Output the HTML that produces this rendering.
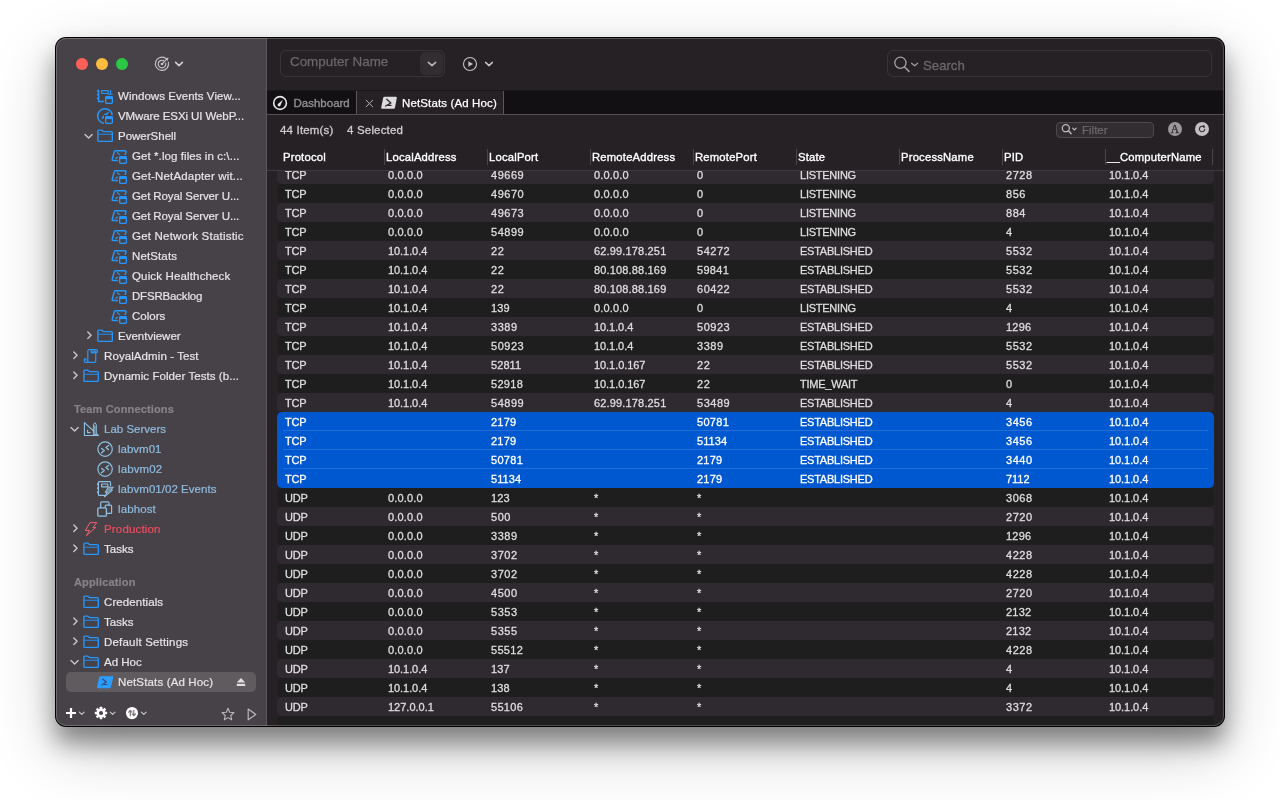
<!DOCTYPE html>
<html><head><meta charset="utf-8"><title>NetStats (Ad Hoc)</title>
<style>
*{box-sizing:border-box;margin:0;padding:0}
html,body{width:1280px;height:800px;overflow:hidden;background:#fff;font-family:"Liberation Sans",sans-serif;}
#win{position:absolute;left:55px;top:37px;width:1170px;height:690px;border-radius:11px;background:#000;
 box-shadow:0 22px 64px rgba(0,0,0,.22),0 16px 24px rgba(0,0,0,.4);}
#inner{position:absolute;left:1px;top:1px;right:1px;bottom:1px;border-radius:10px;overflow:hidden;background:#252125;}
#hl{position:absolute;left:1px;top:1px;right:1px;bottom:1px;border-radius:10px;border:1px solid rgba(255,255,255,.22);pointer-events:none;z-index:50}
/* coordinates inside #abs are page coordinates */
#abs{position:absolute;left:-56px;top:-38px;width:1280px;height:800px;will-change:transform}
#side{position:absolute;left:56px;top:38px;width:211px;height:688px;background:#474247;}
#sideline{position:absolute;left:266px;top:38px;width:1px;height:688px;background:#5a575a}
.t{position:absolute;white-space:nowrap;line-height:20px;height:20px;font-size:11.5px;color:#e6e4e6;-webkit-text-stroke:.2px}
.hd{color:#878387;font-weight:bold;font-size:11px;letter-spacing:.15px}
.lb{color:#8fbbe0}
.rd{color:#f04d5e}
#selrow{position:absolute;left:66px;top:672px;width:190px;height:20px;border-radius:5px;background:#605b5f}
svg{position:absolute;overflow:visible}
#tabbar{position:absolute;left:267px;top:91px;width:958px;height:23px;background:#121012}
#tabline{position:absolute;left:267px;top:114px;width:958px;height:1px;background:#524f52}
#tabact{position:absolute;left:356px;top:91px;width:148px;height:23px;background:#252125;border-left:1px solid #5a575a;border-right:1px solid #5a575a}
#tabtop{position:absolute;left:267px;top:90px;width:958px;height:1px;background:#1b181b}
.tab{position:absolute;white-space:nowrap;font-size:11.5px;line-height:23px;top:91.5px;-webkit-text-stroke:.25px}
.st{font-size:11.5px;color:#cfcdcf;letter-spacing:.18px;-webkit-text-stroke:.3px}
.box{position:absolute;border:1px solid rgba(255,255,255,.09);border-radius:6px}
.ph{position:absolute;white-space:nowrap;color:#6b676b}
.row{position:absolute;left:277px;width:937px;height:19px;border-radius:5px}
.r0{background:#2f2a2f}.r1{background:#1e1e1e}
.c{position:absolute;white-space:nowrap;font-size:11px;line-height:19px;color:#dfdddf;margin-top:1px;-webkit-text-stroke:.3px}
.sel .c{color:#fff}
.n{letter-spacing:.4px}.ip{letter-spacing:.16px}.u{letter-spacing:-.24px}
#selbg{position:absolute;left:277px;top:412px;width:937px;height:76px;border-radius:5px;background:#0058d0}
.sl{position:absolute;left:283px;width:925px;height:1px;background:rgba(255,255,255,.14)}
#thead{position:absolute;left:267px;top:146px;width:958px;height:24px;background:#252125}
#theadline{position:absolute;left:267px;top:170px;width:958px;height:1px;background:#3d393d}
.h{position:absolute;white-space:nowrap;font-size:11.25px;line-height:20px;top:147px;color:#fff;letter-spacing:.2px;-webkit-text-stroke:.35px #fff}
.vs{position:absolute;top:149px;width:1px;height:16px;background:#4a464a}
</style></head><body>
<div id="win"><div id="inner"><div id="abs">

<div id="side"></div><div id="sideline"></div>
<div id="selrow"></div>

<span class="t hd" style="left:74px;top:399px">Team Connections</span>
<span class="t hd" style="left:74px;top:572px">Application</span>
<span class="t " style="left:118px;top:86px;letter-spacing:0.045px">Windows Events View...</span>
<svg class="ic-evt" style="left:97px;top:88px" width="16" height="16" viewBox="0 0 16 16"><path d="M1.6 1.8 V13.5 H6.8" fill="none" stroke="#2697ff" stroke-width="1.4"/><rect x="0" y="2.2" width="1.6" height="1.7" fill="#2697ff"/><rect x="0" y="5.8" width="1.6" height="1.7" fill="#2697ff"/><rect x="0" y="9.6" width="1.6" height="1.7" fill="#2697ff"/><rect x="4.6" y="2.6" width="6.6" height="2.9" rx="0.7" fill="none" stroke="#2697ff" stroke-width="1.2"/><path d="M13.5 2 V6.2 M10.4 6.3 H15.6" fill="none" stroke="#2697ff" stroke-width="1.1"/><rect x="7" y="7" width="10" height="10" fill="#474247"/><rect x="8.65" y="8.65" width="6.7" height="6.7" rx="0.8" fill="none" stroke="#2697ff" stroke-width="1.3"/><rect x="8.6" y="8.6" width="6.8" height="2.5" fill="#2697ff"/></svg>
<span class="t " style="left:118px;top:106px;letter-spacing:-0.09px">VMware ESXi UI WebP...</span>
<svg class="ic-web" style="left:97px;top:108px" width="16" height="16" viewBox="0 0 16 16"><circle cx="8" cy="8" r="7.3" fill="none" stroke="#2697ff" stroke-width="1.5"/><path d="M12.4 3.6 L9 9 L4 11.6 L7.2 6.2 Z" fill="#2697ff"/><rect x="7" y="7" width="10" height="10" fill="#474247"/><rect x="8.65" y="8.65" width="6.7" height="6.7" rx="0.8" fill="none" stroke="#2697ff" stroke-width="1.3"/><rect x="8.6" y="8.6" width="6.8" height="2.5" fill="#2697ff"/></svg>
<span class="t " style="left:118px;top:126px">PowerShell</span>
<svg class="ic-fold" style="left:97px;top:128px" width="16" height="16" viewBox="0 0 16 16"><path d="M0.9 3.1 Q0.9 2.1 1.9 2.1 H4.6 Q5.2 2.1 5.6 2.6 L6.4 3.6 H14.3 Q15.3 3.6 15.3 4.6 V12.4 Q15.3 13.4 14.3 13.4 H1.9 Q0.9 13.4 0.9 12.4 Z" fill="none" stroke="#2697ff" stroke-width="1.35" stroke-linejoin="round"/><path d="M1 6.3 H15.2" stroke="#2a84dc" stroke-width="1.1" fill="none"/></svg>
<svg style="left:84px;top:131px" width="10" height="10" viewBox="0 0 10 10"><path d="M1 3.6 L4.6 6.9 L8.2 3.6" fill="none" stroke="#c9c6c9" stroke-width="1.4" stroke-linecap="round" stroke-linejoin="round"/></svg>
<span class="t " style="left:132px;top:146px;letter-spacing:0.08px">Get *.log files in c:\...</span>
<svg class="ic-ps" style="left:111px;top:148px" width="16" height="16" viewBox="0 0 16 16"><path d="M3.9 2.8 H14.2 Q15.3 2.8 15 3.9 L12.6 12.4 H1.9 Q0.8 12.4 1.2 11.3 L3.3 3.6 Q3.5 2.8 4.3 2.8" fill="none" stroke="#2697ff" stroke-width="1.45" stroke-linejoin="round"/><path d="M6.3 4.6 L8.7 6.8 M6.6 9 L4.8 10.3" fill="none" stroke="#2697ff" stroke-width="1.15" stroke-linecap="round"/><rect x="7" y="7" width="10" height="10" fill="#474247"/><rect x="8.65" y="8.65" width="6.7" height="6.7" rx="0.8" fill="none" stroke="#2697ff" stroke-width="1.3"/><rect x="8.6" y="8.6" width="6.8" height="2.5" fill="#2697ff"/></svg>
<span class="t " style="left:132px;top:166px;letter-spacing:0.17px">Get-NetAdapter wit...</span>
<svg class="ic-ps" style="left:111px;top:168px" width="16" height="16" viewBox="0 0 16 16"><path d="M3.9 2.8 H14.2 Q15.3 2.8 15 3.9 L12.6 12.4 H1.9 Q0.8 12.4 1.2 11.3 L3.3 3.6 Q3.5 2.8 4.3 2.8" fill="none" stroke="#2697ff" stroke-width="1.45" stroke-linejoin="round"/><path d="M6.3 4.6 L8.7 6.8 M6.6 9 L4.8 10.3" fill="none" stroke="#2697ff" stroke-width="1.15" stroke-linecap="round"/><rect x="7" y="7" width="10" height="10" fill="#474247"/><rect x="8.65" y="8.65" width="6.7" height="6.7" rx="0.8" fill="none" stroke="#2697ff" stroke-width="1.3"/><rect x="8.6" y="8.6" width="6.8" height="2.5" fill="#2697ff"/></svg>
<span class="t " style="left:132px;top:186px;letter-spacing:-0.1px">Get Royal Server U...</span>
<svg class="ic-ps" style="left:111px;top:188px" width="16" height="16" viewBox="0 0 16 16"><path d="M3.9 2.8 H14.2 Q15.3 2.8 15 3.9 L12.6 12.4 H1.9 Q0.8 12.4 1.2 11.3 L3.3 3.6 Q3.5 2.8 4.3 2.8" fill="none" stroke="#2697ff" stroke-width="1.45" stroke-linejoin="round"/><path d="M6.3 4.6 L8.7 6.8 M6.6 9 L4.8 10.3" fill="none" stroke="#2697ff" stroke-width="1.15" stroke-linecap="round"/><rect x="7" y="7" width="10" height="10" fill="#474247"/><rect x="8.65" y="8.65" width="6.7" height="6.7" rx="0.8" fill="none" stroke="#2697ff" stroke-width="1.3"/><rect x="8.6" y="8.6" width="6.8" height="2.5" fill="#2697ff"/></svg>
<span class="t " style="left:132px;top:206px;letter-spacing:-0.1px">Get Royal Server U...</span>
<svg class="ic-ps" style="left:111px;top:208px" width="16" height="16" viewBox="0 0 16 16"><path d="M3.9 2.8 H14.2 Q15.3 2.8 15 3.9 L12.6 12.4 H1.9 Q0.8 12.4 1.2 11.3 L3.3 3.6 Q3.5 2.8 4.3 2.8" fill="none" stroke="#2697ff" stroke-width="1.45" stroke-linejoin="round"/><path d="M6.3 4.6 L8.7 6.8 M6.6 9 L4.8 10.3" fill="none" stroke="#2697ff" stroke-width="1.15" stroke-linecap="round"/><rect x="7" y="7" width="10" height="10" fill="#474247"/><rect x="8.65" y="8.65" width="6.7" height="6.7" rx="0.8" fill="none" stroke="#2697ff" stroke-width="1.3"/><rect x="8.6" y="8.6" width="6.8" height="2.5" fill="#2697ff"/></svg>
<span class="t " style="left:132px;top:226px;letter-spacing:0.21px">Get Network Statistic</span>
<svg class="ic-ps" style="left:111px;top:228px" width="16" height="16" viewBox="0 0 16 16"><path d="M3.9 2.8 H14.2 Q15.3 2.8 15 3.9 L12.6 12.4 H1.9 Q0.8 12.4 1.2 11.3 L3.3 3.6 Q3.5 2.8 4.3 2.8" fill="none" stroke="#2697ff" stroke-width="1.45" stroke-linejoin="round"/><path d="M6.3 4.6 L8.7 6.8 M6.6 9 L4.8 10.3" fill="none" stroke="#2697ff" stroke-width="1.15" stroke-linecap="round"/><rect x="7" y="7" width="10" height="10" fill="#474247"/><rect x="8.65" y="8.65" width="6.7" height="6.7" rx="0.8" fill="none" stroke="#2697ff" stroke-width="1.3"/><rect x="8.6" y="8.6" width="6.8" height="2.5" fill="#2697ff"/></svg>
<span class="t " style="left:132px;top:246px;letter-spacing:0.12px">NetStats</span>
<svg class="ic-ps" style="left:111px;top:248px" width="16" height="16" viewBox="0 0 16 16"><path d="M3.9 2.8 H14.2 Q15.3 2.8 15 3.9 L12.6 12.4 H1.9 Q0.8 12.4 1.2 11.3 L3.3 3.6 Q3.5 2.8 4.3 2.8" fill="none" stroke="#2697ff" stroke-width="1.45" stroke-linejoin="round"/><path d="M6.3 4.6 L8.7 6.8 M6.6 9 L4.8 10.3" fill="none" stroke="#2697ff" stroke-width="1.15" stroke-linecap="round"/><rect x="7" y="7" width="10" height="10" fill="#474247"/><rect x="8.65" y="8.65" width="6.7" height="6.7" rx="0.8" fill="none" stroke="#2697ff" stroke-width="1.3"/><rect x="8.6" y="8.6" width="6.8" height="2.5" fill="#2697ff"/></svg>
<span class="t " style="left:132px;top:266px;letter-spacing:0.15px">Quick Healthcheck</span>
<svg class="ic-ps" style="left:111px;top:268px" width="16" height="16" viewBox="0 0 16 16"><path d="M3.9 2.8 H14.2 Q15.3 2.8 15 3.9 L12.6 12.4 H1.9 Q0.8 12.4 1.2 11.3 L3.3 3.6 Q3.5 2.8 4.3 2.8" fill="none" stroke="#2697ff" stroke-width="1.45" stroke-linejoin="round"/><path d="M6.3 4.6 L8.7 6.8 M6.6 9 L4.8 10.3" fill="none" stroke="#2697ff" stroke-width="1.15" stroke-linecap="round"/><rect x="7" y="7" width="10" height="10" fill="#474247"/><rect x="8.65" y="8.65" width="6.7" height="6.7" rx="0.8" fill="none" stroke="#2697ff" stroke-width="1.3"/><rect x="8.6" y="8.6" width="6.8" height="2.5" fill="#2697ff"/></svg>
<span class="t " style="left:132px;top:286px;letter-spacing:-0.18px">DFSRBacklog</span>
<svg class="ic-ps" style="left:111px;top:288px" width="16" height="16" viewBox="0 0 16 16"><path d="M3.9 2.8 H14.2 Q15.3 2.8 15 3.9 L12.6 12.4 H1.9 Q0.8 12.4 1.2 11.3 L3.3 3.6 Q3.5 2.8 4.3 2.8" fill="none" stroke="#2697ff" stroke-width="1.45" stroke-linejoin="round"/><path d="M6.3 4.6 L8.7 6.8 M6.6 9 L4.8 10.3" fill="none" stroke="#2697ff" stroke-width="1.15" stroke-linecap="round"/><rect x="7" y="7" width="10" height="10" fill="#474247"/><rect x="8.65" y="8.65" width="6.7" height="6.7" rx="0.8" fill="none" stroke="#2697ff" stroke-width="1.3"/><rect x="8.6" y="8.6" width="6.8" height="2.5" fill="#2697ff"/></svg>
<span class="t " style="left:132px;top:306px">Colors</span>
<svg class="ic-ps" style="left:111px;top:308px" width="16" height="16" viewBox="0 0 16 16"><path d="M3.9 2.8 H14.2 Q15.3 2.8 15 3.9 L12.6 12.4 H1.9 Q0.8 12.4 1.2 11.3 L3.3 3.6 Q3.5 2.8 4.3 2.8" fill="none" stroke="#2697ff" stroke-width="1.45" stroke-linejoin="round"/><path d="M6.3 4.6 L8.7 6.8 M6.6 9 L4.8 10.3" fill="none" stroke="#2697ff" stroke-width="1.15" stroke-linecap="round"/><rect x="7" y="7" width="10" height="10" fill="#474247"/><rect x="8.65" y="8.65" width="6.7" height="6.7" rx="0.8" fill="none" stroke="#2697ff" stroke-width="1.3"/><rect x="8.6" y="8.6" width="6.8" height="2.5" fill="#2697ff"/></svg>
<span class="t " style="left:118px;top:326px">Eventviewer</span>
<svg class="ic-fold" style="left:97px;top:328px" width="16" height="16" viewBox="0 0 16 16"><path d="M0.9 3.1 Q0.9 2.1 1.9 2.1 H4.6 Q5.2 2.1 5.6 2.6 L6.4 3.6 H14.3 Q15.3 3.6 15.3 4.6 V12.4 Q15.3 13.4 14.3 13.4 H1.9 Q0.9 13.4 0.9 12.4 Z" fill="none" stroke="#2697ff" stroke-width="1.35" stroke-linejoin="round"/><path d="M1 6.3 H15.2" stroke="#2a84dc" stroke-width="1.1" fill="none"/></svg>
<svg style="left:84px;top:331px" width="10" height="10" viewBox="0 0 10 10"><path d="M3.8 0.9 L7.1 4.3 L3.8 7.6" fill="none" stroke="#c9c6c9" stroke-width="1.4" stroke-linecap="round" stroke-linejoin="round"/></svg>
<span class="t " style="left:104px;top:346px;letter-spacing:0.09px">RoyalAdmin - Test</span>
<svg class="ic-doc" style="left:83px;top:348px" width="16" height="16" viewBox="0 0 16 16"><path d="M4.8 14.2 V3.2 Q4.8 1.7 6.3 1.7 H13.2 Q14.4 1.7 14.4 2.9 V3.6 Q14.4 4.7 13.3 4.7 H8.4 V3.2 Q8.4 1.7 6.9 1.7 M12.7 4.8 V12.9 Q12.7 14.3 11.3 14.3 H2.8 Q1.4 14.3 1.4 12.9 V11.4 Q1.4 10.5 2.2 10.5 Q3 10.5 3 11.4 V12" fill="none" stroke="#2697ff" stroke-width="1.2" stroke-linejoin="round" stroke-linecap="round"/><path d="M9.4 3.2 H13.4" stroke="#2697ff" stroke-width="1.3"/></svg>
<svg style="left:70px;top:351px" width="10" height="10" viewBox="0 0 10 10"><path d="M3.8 0.9 L7.1 4.3 L3.8 7.6" fill="none" stroke="#c9c6c9" stroke-width="1.4" stroke-linecap="round" stroke-linejoin="round"/></svg>
<span class="t " style="left:104px;top:366px;letter-spacing:0.06px">Dynamic Folder Tests (b...</span>
<svg class="ic-fold" style="left:83px;top:368px" width="16" height="16" viewBox="0 0 16 16"><path d="M0.9 3.1 Q0.9 2.1 1.9 2.1 H4.6 Q5.2 2.1 5.6 2.6 L6.4 3.6 H14.3 Q15.3 3.6 15.3 4.6 V12.4 Q15.3 13.4 14.3 13.4 H1.9 Q0.9 13.4 0.9 12.4 Z" fill="none" stroke="#2697ff" stroke-width="1.35" stroke-linejoin="round"/><path d="M1 6.3 H15.2" stroke="#2a84dc" stroke-width="1.1" fill="none"/></svg>
<svg style="left:70px;top:371px" width="10" height="10" viewBox="0 0 10 10"><path d="M3.8 0.9 L7.1 4.3 L3.8 7.6" fill="none" stroke="#c9c6c9" stroke-width="1.4" stroke-linecap="round" stroke-linejoin="round"/></svg>
<span class="t lb" style="left:104px;top:419px">Lab Servers</span>
<svg class="ic-lab" style="left:83px;top:421px" width="16" height="16" viewBox="0 0 16 16"><path d="M1.4 1.6 V14.5 H15.4 Z" fill="none" stroke="#8fc1e3" stroke-width="1.1" stroke-linejoin="round"/><path d="M4.6 8.8 V11.6 H7.6" fill="none" stroke="#8fc1e3" stroke-width="1.1"/><path d="M10.4 13.6 V3.8 L11.85 1.7 L13.3 3.8 V13.6 Z M11.85 4.5 V13.4" fill="#474247" stroke="#8fc1e3" stroke-width="1" stroke-linejoin="round"/></svg>
<svg style="left:70px;top:424px" width="10" height="10" viewBox="0 0 10 10"><path d="M1 3.6 L4.6 6.9 L8.2 3.6" fill="none" stroke="#c9c6c9" stroke-width="1.4" stroke-linecap="round" stroke-linejoin="round"/></svg>
<span class="t lb" style="left:118px;top:439px">labvm01</span>
<svg class="ic-rdp" style="left:97px;top:441px" width="16" height="16" viewBox="0 0 16 16"><circle cx="8.1" cy="8.1" r="7.2" fill="none" stroke="#8fc1e3" stroke-width="1.2"/><path d="M4.6 7.4 L7.3 9.5 L4.6 11.8 M11.6 4.4 L8.9 6.4 L11.4 8.6" fill="none" stroke="#8fc1e3" stroke-width="1.3" stroke-linecap="round" stroke-linejoin="round"/></svg>
<span class="t lb" style="left:118px;top:459px;letter-spacing:0.1px">labvm02</span>
<svg class="ic-rdp" style="left:97px;top:461px" width="16" height="16" viewBox="0 0 16 16"><circle cx="8.1" cy="8.1" r="7.2" fill="none" stroke="#8fc1e3" stroke-width="1.2"/><path d="M4.6 7.4 L7.3 9.5 L4.6 11.8 M11.6 4.4 L8.9 6.4 L11.4 8.6" fill="none" stroke="#8fc1e3" stroke-width="1.3" stroke-linecap="round" stroke-linejoin="round"/></svg>
<span class="t lb" style="left:118px;top:479px;letter-spacing:0.04px">labvm01/02 Events</span>
<svg class="ic-evt2" style="left:97px;top:481px" width="16" height="16" viewBox="0 0 16 16"><path d="M8 14.4 H2.3 Q1.4 14.4 1.4 13.5 V1.5 Q1.4 0.6 2.3 0.6 H12.6 Q13.5 0.6 13.5 1.5 V5" fill="none" stroke="#8fc1e3" stroke-width="1.2"/><rect x="0" y="2.4" width="1.5" height="1.7" fill="#8fc1e3"/><rect x="0" y="6.4" width="1.5" height="1.7" fill="#8fc1e3"/><rect x="0" y="10.4" width="1.5" height="1.7" fill="#8fc1e3"/><rect x="4.6" y="3" width="6.2" height="2.8" rx="0.4" fill="none" stroke="#8fc1e3" stroke-width="1.2"/><path d="M11.2 6.2 H16.4 L13.8 9.2 H15.6 L7.4 16 L10.2 11.4 H8.2 Z" fill="#6f8fa8" stroke="#9fcbe8" stroke-width="0.9" stroke-linejoin="round"/></svg>
<span class="t lb" style="left:118px;top:499px;letter-spacing:0.1px">labhost</span>
<svg class="ic-vm" style="left:97px;top:501px" width="16" height="16" viewBox="0 0 16 16"><rect x="3.7" y="0.8" width="8.3" height="8.3" rx="1" fill="#474247" stroke="#8fc1e3" stroke-width="1.2"/><rect x="8.2" y="4.2" width="6.4" height="8.2" rx="1" fill="#474247" stroke="#8fc1e3" stroke-width="1.2"/><rect x="0.8" y="6.8" width="8.6" height="8.4" rx="1.2" fill="#474247" stroke="#8fc1e3" stroke-width="1.3"/></svg>
<span class="t rd" style="left:104px;top:519px;letter-spacing:0.16px">Production</span>
<svg class="ic-bolt" style="left:83px;top:521px" width="16" height="16" viewBox="0 0 16 16"><path d="M7 1.6 H13.8 L9.9 6.4 H12.8 L3.3 14.7 L6.5 9.5 H2.4 Z" fill="none" stroke="#f0636f" stroke-width="1" stroke-linejoin="round"/></svg>
<svg style="left:70px;top:524px" width="10" height="10" viewBox="0 0 10 10"><path d="M3.8 0.9 L7.1 4.3 L3.8 7.6" fill="none" stroke="#c9c6c9" stroke-width="1.4" stroke-linecap="round" stroke-linejoin="round"/></svg>
<span class="t " style="left:104px;top:539px">Tasks</span>
<svg class="ic-fold" style="left:83px;top:541px" width="16" height="16" viewBox="0 0 16 16"><path d="M0.9 3.1 Q0.9 2.1 1.9 2.1 H4.6 Q5.2 2.1 5.6 2.6 L6.4 3.6 H14.3 Q15.3 3.6 15.3 4.6 V12.4 Q15.3 13.4 14.3 13.4 H1.9 Q0.9 13.4 0.9 12.4 Z" fill="none" stroke="#2697ff" stroke-width="1.35" stroke-linejoin="round"/><path d="M1 6.3 H15.2" stroke="#2a84dc" stroke-width="1.1" fill="none"/></svg>
<svg style="left:70px;top:544px" width="10" height="10" viewBox="0 0 10 10"><path d="M3.8 0.9 L7.1 4.3 L3.8 7.6" fill="none" stroke="#c9c6c9" stroke-width="1.4" stroke-linecap="round" stroke-linejoin="round"/></svg>
<span class="t " style="left:104px;top:592px;letter-spacing:0.09px">Credentials</span>
<svg class="ic-fold" style="left:83px;top:594px" width="16" height="16" viewBox="0 0 16 16"><path d="M0.9 3.1 Q0.9 2.1 1.9 2.1 H4.6 Q5.2 2.1 5.6 2.6 L6.4 3.6 H14.3 Q15.3 3.6 15.3 4.6 V12.4 Q15.3 13.4 14.3 13.4 H1.9 Q0.9 13.4 0.9 12.4 Z" fill="none" stroke="#2697ff" stroke-width="1.35" stroke-linejoin="round"/><path d="M1 6.3 H15.2" stroke="#2a84dc" stroke-width="1.1" fill="none"/></svg>
<span class="t " style="left:104px;top:612px">Tasks</span>
<svg class="ic-fold" style="left:83px;top:614px" width="16" height="16" viewBox="0 0 16 16"><path d="M0.9 3.1 Q0.9 2.1 1.9 2.1 H4.6 Q5.2 2.1 5.6 2.6 L6.4 3.6 H14.3 Q15.3 3.6 15.3 4.6 V12.4 Q15.3 13.4 14.3 13.4 H1.9 Q0.9 13.4 0.9 12.4 Z" fill="none" stroke="#2697ff" stroke-width="1.35" stroke-linejoin="round"/><path d="M1 6.3 H15.2" stroke="#2a84dc" stroke-width="1.1" fill="none"/></svg>
<svg style="left:70px;top:617px" width="10" height="10" viewBox="0 0 10 10"><path d="M3.8 0.9 L7.1 4.3 L3.8 7.6" fill="none" stroke="#c9c6c9" stroke-width="1.4" stroke-linecap="round" stroke-linejoin="round"/></svg>
<span class="t " style="left:104px;top:632px;letter-spacing:0.19px">Default Settings</span>
<svg class="ic-fold" style="left:83px;top:634px" width="16" height="16" viewBox="0 0 16 16"><path d="M0.9 3.1 Q0.9 2.1 1.9 2.1 H4.6 Q5.2 2.1 5.6 2.6 L6.4 3.6 H14.3 Q15.3 3.6 15.3 4.6 V12.4 Q15.3 13.4 14.3 13.4 H1.9 Q0.9 13.4 0.9 12.4 Z" fill="none" stroke="#2697ff" stroke-width="1.35" stroke-linejoin="round"/><path d="M1 6.3 H15.2" stroke="#2a84dc" stroke-width="1.1" fill="none"/></svg>
<svg style="left:70px;top:637px" width="10" height="10" viewBox="0 0 10 10"><path d="M3.8 0.9 L7.1 4.3 L3.8 7.6" fill="none" stroke="#c9c6c9" stroke-width="1.4" stroke-linecap="round" stroke-linejoin="round"/></svg>
<span class="t " style="left:104px;top:652px">Ad Hoc</span>
<svg class="ic-fold" style="left:83px;top:654px" width="16" height="16" viewBox="0 0 16 16"><path d="M0.9 3.1 Q0.9 2.1 1.9 2.1 H4.6 Q5.2 2.1 5.6 2.6 L6.4 3.6 H14.3 Q15.3 3.6 15.3 4.6 V12.4 Q15.3 13.4 14.3 13.4 H1.9 Q0.9 13.4 0.9 12.4 Z" fill="none" stroke="#2697ff" stroke-width="1.35" stroke-linejoin="round"/><path d="M1 6.3 H15.2" stroke="#2a84dc" stroke-width="1.1" fill="none"/></svg>
<svg style="left:70px;top:657px" width="10" height="10" viewBox="0 0 10 10"><path d="M1 3.6 L4.6 6.9 L8.2 3.6" fill="none" stroke="#c9c6c9" stroke-width="1.4" stroke-linecap="round" stroke-linejoin="round"/></svg>
<span class="t " style="left:118px;top:672px;letter-spacing:0.15px">NetStats (Ad Hoc)</span>
<svg class="ic-psf" style="left:97px;top:674px" width="16" height="16" viewBox="0 0 16 16"><path d="M3.3 3.2 H15.2 Q16.5 3.2 16.2 4.5 L14 15 Q13.8 16.2 12.6 16.2 H0.9 Q-0.3 16.2 0 15 L2.2 4.2 Q2.4 3.2 3.3 3.2 Z" transform="translate(0,-0.7) scale(1,0.92)" fill="#2a9dff"/><path d="M5.6 5 L9.3 8 L4.8 10.9 M7.2 10.5 H9.8" fill="none" stroke="#34466e" stroke-width="1.05" stroke-linecap="round" stroke-linejoin="round"/></svg>
<div id="topbar">
<div class="box" style="left:280px;top:50px;width:165px;height:27px"></div>
<div style="position:absolute;left:420px;top:52px;width:23px;height:23px;border-radius:5px;background:#322d31"></div>
<span class="ph" style="left:290px;top:52px;font-size:13.4px;line-height:20px;-webkit-text-stroke:.25px">Computer Name</span>
<div class="box" style="left:887px;top:50px;width:325px;height:27px"></div>
<span class="ph" style="left:923px;top:55.5px;font-size:13.2px;line-height:20px;-webkit-text-stroke:.3px">Search</span>
</div>
<div id="tabbar"></div><div id="tabact"></div><div id="tabline"></div><div id="tabtop"></div>
<span class="tab" style="left:293.5px;color:#928e92;-webkit-text-stroke:.35px">Dashboard</span>
<span class="tab" style="left:402px;color:#fff;letter-spacing:.13px">NetStats (Ad Hoc)</span>
<span class="t st" style="left:280px;top:120px">44 Item(s)</span>
<span class="t st" style="left:347px;top:120px">4 Selected</span>
<div style="position:absolute;left:1056px;top:122px;width:98px;height:16px;border-radius:4px;background:#322d31;border:1px solid #4d494d"></div>
<span class="ph" style="left:1082px;top:120px;font-size:11.5px;line-height:20px;-webkit-text-stroke:.25px">Filter</span>

<div id="table">
<div id="selbg"></div>
<div class="row r0" style="top:165px"></div>
<div class="row r1" style="top:184px"></div>
<div class="row r0" style="top:203px"></div>
<div class="row r1" style="top:222px"></div>
<div class="row r0" style="top:241px"></div>
<div class="row r1" style="top:260px"></div>
<div class="row r0" style="top:279px"></div>
<div class="row r1" style="top:298px"></div>
<div class="row r0" style="top:317px"></div>
<div class="row r1" style="top:336px"></div>
<div class="row r0" style="top:355px"></div>
<div class="row r1" style="top:374px"></div>
<div class="row r0" style="top:393px"></div>
<div class="row r1" style="top:488px"></div>
<div class="row r0" style="top:507px"></div>
<div class="row r1" style="top:526px"></div>
<div class="row r0" style="top:545px"></div>
<div class="row r1" style="top:564px"></div>
<div class="row r0" style="top:583px"></div>
<div class="row r1" style="top:602px"></div>
<div class="row r0" style="top:621px"></div>
<div class="row r1" style="top:640px"></div>
<div class="row r0" style="top:659px"></div>
<div class="row r1" style="top:678px"></div>
<div class="row r0" style="top:697px"></div>
<div class="row r1" style="top:716px"></div>
<div class="sl" style="top:430px"></div>
<div class="sl" style="top:449px"></div>
<div class="sl" style="top:468px"></div>
<div class="nrm"><span class="c" style="left:285px;top:165px;letter-spacing:-0.24px">TCP</span><span class="c" style="left:388px;top:165px;letter-spacing:0.17px">0.0.0.0</span><span class="c" style="left:491px;top:165px;letter-spacing:0.53px">49669</span><span class="c" style="left:594px;top:165px;letter-spacing:0.17px">0.0.0.0</span><span class="c" style="left:697px;top:165px;letter-spacing:0.53px">0</span><span class="c" style="left:800px;top:165px;letter-spacing:-0.24px">LISTENING</span><span class="c" style="left:1006px;top:165px;letter-spacing:0.53px">2728</span><span class="c" style="left:1109px;top:165px;letter-spacing:-0.07px">10.1.0.4</span></div>
<div class="nrm"><span class="c" style="left:285px;top:184px;letter-spacing:-0.24px">TCP</span><span class="c" style="left:388px;top:184px;letter-spacing:0.17px">0.0.0.0</span><span class="c" style="left:491px;top:184px;letter-spacing:0.53px">49670</span><span class="c" style="left:594px;top:184px;letter-spacing:0.17px">0.0.0.0</span><span class="c" style="left:697px;top:184px;letter-spacing:0.53px">0</span><span class="c" style="left:800px;top:184px;letter-spacing:-0.24px">LISTENING</span><span class="c" style="left:1006px;top:184px;letter-spacing:0.53px">856</span><span class="c" style="left:1109px;top:184px;letter-spacing:-0.07px">10.1.0.4</span></div>
<div class="nrm"><span class="c" style="left:285px;top:203px;letter-spacing:-0.24px">TCP</span><span class="c" style="left:388px;top:203px;letter-spacing:0.17px">0.0.0.0</span><span class="c" style="left:491px;top:203px;letter-spacing:0.53px">49673</span><span class="c" style="left:594px;top:203px;letter-spacing:0.17px">0.0.0.0</span><span class="c" style="left:697px;top:203px;letter-spacing:0.53px">0</span><span class="c" style="left:800px;top:203px;letter-spacing:-0.24px">LISTENING</span><span class="c" style="left:1006px;top:203px;letter-spacing:0.53px">884</span><span class="c" style="left:1109px;top:203px;letter-spacing:-0.07px">10.1.0.4</span></div>
<div class="nrm"><span class="c" style="left:285px;top:222px;letter-spacing:-0.24px">TCP</span><span class="c" style="left:388px;top:222px;letter-spacing:0.17px">0.0.0.0</span><span class="c" style="left:491px;top:222px;letter-spacing:0.53px">54899</span><span class="c" style="left:594px;top:222px;letter-spacing:0.17px">0.0.0.0</span><span class="c" style="left:697px;top:222px;letter-spacing:0.53px">0</span><span class="c" style="left:800px;top:222px;letter-spacing:-0.24px">LISTENING</span><span class="c" style="left:1006px;top:222px;letter-spacing:0.53px">4</span><span class="c" style="left:1109px;top:222px;letter-spacing:-0.07px">10.1.0.4</span></div>
<div class="nrm"><span class="c" style="left:285px;top:241px;letter-spacing:-0.24px">TCP</span><span class="c" style="left:388px;top:241px;letter-spacing:-0.07px">10.1.0.4</span><span class="c" style="left:491px;top:241px;letter-spacing:0.53px">22</span><span class="c" style="left:594px;top:241px;letter-spacing:0.16px">62.99.178.251</span><span class="c" style="left:697px;top:241px;letter-spacing:0.53px">54272</span><span class="c" style="left:800px;top:241px;letter-spacing:-0.24px">ESTABLISHED</span><span class="c" style="left:1006px;top:241px;letter-spacing:0.53px">5532</span><span class="c" style="left:1109px;top:241px;letter-spacing:-0.07px">10.1.0.4</span></div>
<div class="nrm"><span class="c" style="left:285px;top:260px;letter-spacing:-0.24px">TCP</span><span class="c" style="left:388px;top:260px;letter-spacing:-0.07px">10.1.0.4</span><span class="c" style="left:491px;top:260px;letter-spacing:0.53px">22</span><span class="c" style="left:594px;top:260px;letter-spacing:0.16px">80.108.88.169</span><span class="c" style="left:697px;top:260px;letter-spacing:0.30px">59841</span><span class="c" style="left:800px;top:260px;letter-spacing:-0.24px">ESTABLISHED</span><span class="c" style="left:1006px;top:260px;letter-spacing:0.53px">5532</span><span class="c" style="left:1109px;top:260px;letter-spacing:-0.07px">10.1.0.4</span></div>
<div class="nrm"><span class="c" style="left:285px;top:279px;letter-spacing:-0.24px">TCP</span><span class="c" style="left:388px;top:279px;letter-spacing:-0.07px">10.1.0.4</span><span class="c" style="left:491px;top:279px;letter-spacing:0.53px">22</span><span class="c" style="left:594px;top:279px;letter-spacing:0.16px">80.108.88.169</span><span class="c" style="left:697px;top:279px;letter-spacing:0.53px">60422</span><span class="c" style="left:800px;top:279px;letter-spacing:-0.24px">ESTABLISHED</span><span class="c" style="left:1006px;top:279px;letter-spacing:0.53px">5532</span><span class="c" style="left:1109px;top:279px;letter-spacing:-0.07px">10.1.0.4</span></div>
<div class="nrm"><span class="c" style="left:285px;top:298px;letter-spacing:-0.24px">TCP</span><span class="c" style="left:388px;top:298px;letter-spacing:-0.07px">10.1.0.4</span><span class="c" style="left:491px;top:298px;letter-spacing:0.15px">139</span><span class="c" style="left:594px;top:298px;letter-spacing:0.17px">0.0.0.0</span><span class="c" style="left:697px;top:298px;letter-spacing:0.53px">0</span><span class="c" style="left:800px;top:298px;letter-spacing:-0.24px">LISTENING</span><span class="c" style="left:1006px;top:298px;letter-spacing:0.53px">4</span><span class="c" style="left:1109px;top:298px;letter-spacing:-0.07px">10.1.0.4</span></div>
<div class="nrm"><span class="c" style="left:285px;top:317px;letter-spacing:-0.24px">TCP</span><span class="c" style="left:388px;top:317px;letter-spacing:-0.07px">10.1.0.4</span><span class="c" style="left:491px;top:317px;letter-spacing:0.53px">3389</span><span class="c" style="left:594px;top:317px;letter-spacing:-0.07px">10.1.0.4</span><span class="c" style="left:697px;top:317px;letter-spacing:0.53px">50923</span><span class="c" style="left:800px;top:317px;letter-spacing:-0.24px">ESTABLISHED</span><span class="c" style="left:1006px;top:317px;letter-spacing:0.25px">1296</span><span class="c" style="left:1109px;top:317px;letter-spacing:-0.07px">10.1.0.4</span></div>
<div class="nrm"><span class="c" style="left:285px;top:336px;letter-spacing:-0.24px">TCP</span><span class="c" style="left:388px;top:336px;letter-spacing:-0.07px">10.1.0.4</span><span class="c" style="left:491px;top:336px;letter-spacing:0.53px">50923</span><span class="c" style="left:594px;top:336px;letter-spacing:-0.07px">10.1.0.4</span><span class="c" style="left:697px;top:336px;letter-spacing:0.53px">3389</span><span class="c" style="left:800px;top:336px;letter-spacing:-0.24px">ESTABLISHED</span><span class="c" style="left:1006px;top:336px;letter-spacing:0.53px">5532</span><span class="c" style="left:1109px;top:336px;letter-spacing:-0.07px">10.1.0.4</span></div>
<div class="nrm"><span class="c" style="left:285px;top:355px;letter-spacing:-0.24px">TCP</span><span class="c" style="left:388px;top:355px;letter-spacing:-0.07px">10.1.0.4</span><span class="c" style="left:491px;top:355px;letter-spacing:0.07px">52811</span><span class="c" style="left:594px;top:355px;letter-spacing:-0.06px">10.1.0.167</span><span class="c" style="left:697px;top:355px;letter-spacing:0.53px">22</span><span class="c" style="left:800px;top:355px;letter-spacing:-0.24px">ESTABLISHED</span><span class="c" style="left:1006px;top:355px;letter-spacing:0.53px">5532</span><span class="c" style="left:1109px;top:355px;letter-spacing:-0.07px">10.1.0.4</span></div>
<div class="nrm"><span class="c" style="left:285px;top:374px;letter-spacing:-0.24px">TCP</span><span class="c" style="left:388px;top:374px;letter-spacing:-0.07px">10.1.0.4</span><span class="c" style="left:491px;top:374px;letter-spacing:0.30px">52918</span><span class="c" style="left:594px;top:374px;letter-spacing:-0.06px">10.1.0.167</span><span class="c" style="left:697px;top:374px;letter-spacing:0.53px">22</span><span class="c" style="left:800px;top:374px;letter-spacing:-0.24px">TIME_WAIT</span><span class="c" style="left:1006px;top:374px;letter-spacing:0.53px">0</span><span class="c" style="left:1109px;top:374px;letter-spacing:-0.07px">10.1.0.4</span></div>
<div class="nrm"><span class="c" style="left:285px;top:393px;letter-spacing:-0.24px">TCP</span><span class="c" style="left:388px;top:393px;letter-spacing:-0.07px">10.1.0.4</span><span class="c" style="left:491px;top:393px;letter-spacing:0.53px">54899</span><span class="c" style="left:594px;top:393px;letter-spacing:0.16px">62.99.178.251</span><span class="c" style="left:697px;top:393px;letter-spacing:0.53px">53489</span><span class="c" style="left:800px;top:393px;letter-spacing:-0.24px">ESTABLISHED</span><span class="c" style="left:1006px;top:393px;letter-spacing:0.53px">4</span><span class="c" style="left:1109px;top:393px;letter-spacing:-0.07px">10.1.0.4</span></div>
<div class="sel"><span class="c" style="left:285px;top:412px;letter-spacing:-0.24px">TCP</span><span class="c" style="left:491px;top:412px;letter-spacing:0.25px">2179</span><span class="c" style="left:697px;top:412px;letter-spacing:0.30px">50781</span><span class="c" style="left:800px;top:412px;letter-spacing:-0.24px">ESTABLISHED</span><span class="c" style="left:1006px;top:412px;letter-spacing:0.53px">3456</span><span class="c" style="left:1109px;top:412px;letter-spacing:-0.07px">10.1.0.4</span></div>
<div class="sel"><span class="c" style="left:285px;top:431px;letter-spacing:-0.24px">TCP</span><span class="c" style="left:491px;top:431px;letter-spacing:0.25px">2179</span><span class="c" style="left:697px;top:431px;letter-spacing:0.07px">51134</span><span class="c" style="left:800px;top:431px;letter-spacing:-0.24px">ESTABLISHED</span><span class="c" style="left:1006px;top:431px;letter-spacing:0.53px">3456</span><span class="c" style="left:1109px;top:431px;letter-spacing:-0.07px">10.1.0.4</span></div>
<div class="sel"><span class="c" style="left:285px;top:450px;letter-spacing:-0.24px">TCP</span><span class="c" style="left:491px;top:450px;letter-spacing:0.30px">50781</span><span class="c" style="left:697px;top:450px;letter-spacing:0.25px">2179</span><span class="c" style="left:800px;top:450px;letter-spacing:-0.24px">ESTABLISHED</span><span class="c" style="left:1006px;top:450px;letter-spacing:0.53px">3440</span><span class="c" style="left:1109px;top:450px;letter-spacing:-0.07px">10.1.0.4</span></div>
<div class="sel"><span class="c" style="left:285px;top:469px;letter-spacing:-0.24px">TCP</span><span class="c" style="left:491px;top:469px;letter-spacing:0.07px">51134</span><span class="c" style="left:697px;top:469px;letter-spacing:0.25px">2179</span><span class="c" style="left:800px;top:469px;letter-spacing:-0.24px">ESTABLISHED</span><span class="c" style="left:1006px;top:469px;letter-spacing:-0.04px">7112</span><span class="c" style="left:1109px;top:469px;letter-spacing:-0.07px">10.1.0.4</span></div>
<div class="nrm"><span class="c" style="left:285px;top:488px;letter-spacing:-0.24px">UDP</span><span class="c" style="left:388px;top:488px;letter-spacing:0.17px">0.0.0.0</span><span class="c" style="left:491px;top:488px;letter-spacing:0.15px">123</span><span class="c" style="left:594px;top:488px;letter-spacing:0.00px">*</span><span class="c" style="left:697px;top:488px;letter-spacing:0.00px">*</span><span class="c" style="left:1006px;top:488px;letter-spacing:0.53px">3068</span><span class="c" style="left:1109px;top:488px;letter-spacing:-0.07px">10.1.0.4</span></div>
<div class="nrm"><span class="c" style="left:285px;top:507px;letter-spacing:-0.24px">UDP</span><span class="c" style="left:388px;top:507px;letter-spacing:0.17px">0.0.0.0</span><span class="c" style="left:491px;top:507px;letter-spacing:0.53px">500</span><span class="c" style="left:594px;top:507px;letter-spacing:0.00px">*</span><span class="c" style="left:697px;top:507px;letter-spacing:0.00px">*</span><span class="c" style="left:1006px;top:507px;letter-spacing:0.53px">2720</span><span class="c" style="left:1109px;top:507px;letter-spacing:-0.07px">10.1.0.4</span></div>
<div class="nrm"><span class="c" style="left:285px;top:526px;letter-spacing:-0.24px">UDP</span><span class="c" style="left:388px;top:526px;letter-spacing:0.17px">0.0.0.0</span><span class="c" style="left:491px;top:526px;letter-spacing:0.53px">3389</span><span class="c" style="left:594px;top:526px;letter-spacing:0.00px">*</span><span class="c" style="left:697px;top:526px;letter-spacing:0.00px">*</span><span class="c" style="left:1006px;top:526px;letter-spacing:0.25px">1296</span><span class="c" style="left:1109px;top:526px;letter-spacing:-0.07px">10.1.0.4</span></div>
<div class="nrm"><span class="c" style="left:285px;top:545px;letter-spacing:-0.24px">UDP</span><span class="c" style="left:388px;top:545px;letter-spacing:0.17px">0.0.0.0</span><span class="c" style="left:491px;top:545px;letter-spacing:0.53px">3702</span><span class="c" style="left:594px;top:545px;letter-spacing:0.00px">*</span><span class="c" style="left:697px;top:545px;letter-spacing:0.00px">*</span><span class="c" style="left:1006px;top:545px;letter-spacing:0.53px">4228</span><span class="c" style="left:1109px;top:545px;letter-spacing:-0.07px">10.1.0.4</span></div>
<div class="nrm"><span class="c" style="left:285px;top:564px;letter-spacing:-0.24px">UDP</span><span class="c" style="left:388px;top:564px;letter-spacing:0.17px">0.0.0.0</span><span class="c" style="left:491px;top:564px;letter-spacing:0.53px">3702</span><span class="c" style="left:594px;top:564px;letter-spacing:0.00px">*</span><span class="c" style="left:697px;top:564px;letter-spacing:0.00px">*</span><span class="c" style="left:1006px;top:564px;letter-spacing:0.53px">4228</span><span class="c" style="left:1109px;top:564px;letter-spacing:-0.07px">10.1.0.4</span></div>
<div class="nrm"><span class="c" style="left:285px;top:583px;letter-spacing:-0.24px">UDP</span><span class="c" style="left:388px;top:583px;letter-spacing:0.17px">0.0.0.0</span><span class="c" style="left:491px;top:583px;letter-spacing:0.53px">4500</span><span class="c" style="left:594px;top:583px;letter-spacing:0.00px">*</span><span class="c" style="left:697px;top:583px;letter-spacing:0.00px">*</span><span class="c" style="left:1006px;top:583px;letter-spacing:0.53px">2720</span><span class="c" style="left:1109px;top:583px;letter-spacing:-0.07px">10.1.0.4</span></div>
<div class="nrm"><span class="c" style="left:285px;top:602px;letter-spacing:-0.24px">UDP</span><span class="c" style="left:388px;top:602px;letter-spacing:0.17px">0.0.0.0</span><span class="c" style="left:491px;top:602px;letter-spacing:0.53px">5353</span><span class="c" style="left:594px;top:602px;letter-spacing:0.00px">*</span><span class="c" style="left:697px;top:602px;letter-spacing:0.00px">*</span><span class="c" style="left:1006px;top:602px;letter-spacing:0.25px">2132</span><span class="c" style="left:1109px;top:602px;letter-spacing:-0.07px">10.1.0.4</span></div>
<div class="nrm"><span class="c" style="left:285px;top:621px;letter-spacing:-0.24px">UDP</span><span class="c" style="left:388px;top:621px;letter-spacing:0.17px">0.0.0.0</span><span class="c" style="left:491px;top:621px;letter-spacing:0.53px">5355</span><span class="c" style="left:594px;top:621px;letter-spacing:0.00px">*</span><span class="c" style="left:697px;top:621px;letter-spacing:0.00px">*</span><span class="c" style="left:1006px;top:621px;letter-spacing:0.25px">2132</span><span class="c" style="left:1109px;top:621px;letter-spacing:-0.07px">10.1.0.4</span></div>
<div class="nrm"><span class="c" style="left:285px;top:640px;letter-spacing:-0.24px">UDP</span><span class="c" style="left:388px;top:640px;letter-spacing:0.17px">0.0.0.0</span><span class="c" style="left:491px;top:640px;letter-spacing:0.30px">55512</span><span class="c" style="left:594px;top:640px;letter-spacing:0.00px">*</span><span class="c" style="left:697px;top:640px;letter-spacing:0.00px">*</span><span class="c" style="left:1006px;top:640px;letter-spacing:0.53px">4228</span><span class="c" style="left:1109px;top:640px;letter-spacing:-0.07px">10.1.0.4</span></div>
<div class="nrm"><span class="c" style="left:285px;top:659px;letter-spacing:-0.24px">UDP</span><span class="c" style="left:388px;top:659px;letter-spacing:-0.07px">10.1.0.4</span><span class="c" style="left:491px;top:659px;letter-spacing:0.15px">137</span><span class="c" style="left:594px;top:659px;letter-spacing:0.00px">*</span><span class="c" style="left:697px;top:659px;letter-spacing:0.00px">*</span><span class="c" style="left:1006px;top:659px;letter-spacing:0.53px">4</span><span class="c" style="left:1109px;top:659px;letter-spacing:-0.07px">10.1.0.4</span></div>
<div class="nrm"><span class="c" style="left:285px;top:678px;letter-spacing:-0.24px">UDP</span><span class="c" style="left:388px;top:678px;letter-spacing:-0.07px">10.1.0.4</span><span class="c" style="left:491px;top:678px;letter-spacing:0.15px">138</span><span class="c" style="left:594px;top:678px;letter-spacing:0.00px">*</span><span class="c" style="left:697px;top:678px;letter-spacing:0.00px">*</span><span class="c" style="left:1006px;top:678px;letter-spacing:0.53px">4</span><span class="c" style="left:1109px;top:678px;letter-spacing:-0.07px">10.1.0.4</span></div>
<div class="nrm"><span class="c" style="left:285px;top:697px;letter-spacing:-0.24px">UDP</span><span class="c" style="left:388px;top:697px;letter-spacing:-0.00px">127.0.0.1</span><span class="c" style="left:491px;top:697px;letter-spacing:0.30px">55106</span><span class="c" style="left:594px;top:697px;letter-spacing:0.00px">*</span><span class="c" style="left:697px;top:697px;letter-spacing:0.00px">*</span><span class="c" style="left:1006px;top:697px;letter-spacing:0.53px">3372</span><span class="c" style="left:1109px;top:697px;letter-spacing:-0.07px">10.1.0.4</span></div>
</div>
<div id="thead"></div><div id="theadline"></div>
<span class="h" style="left:283px">Protocol</span>
<span class="h" style="left:386px">LocalAddress</span>
<span class="h" style="left:489px">LocalPort</span>
<span class="h" style="left:592px">RemoteAddress</span>
<span class="h" style="left:695px">RemotePort</span>
<span class="h" style="left:798px">State</span>
<span class="h" style="left:901px">ProcessName</span>
<span class="h" style="left:1004px">PID</span>
<span class="h" style="left:1107px">__ComputerName</span>
<div class="vs" style="left:384px"></div><div class="vs" style="left:487px"></div><div class="vs" style="left:590px"></div><div class="vs" style="left:693px"></div><div class="vs" style="left:796px"></div><div class="vs" style="left:899px"></div><div class="vs" style="left:1002px"></div><div class="vs" style="left:1105px"></div><div class="vs" style="left:1212px"></div>

<!-- traffic lights -->
<div style="position:absolute;left:76px;top:58px;width:12px;height:12px;border-radius:50%;background:#fe5f57"></div>
<div style="position:absolute;left:96px;top:58px;width:12px;height:12px;border-radius:50%;background:#fdbc40"></div>
<div style="position:absolute;left:116px;top:58px;width:12px;height:12px;border-radius:50%;background:#2bc845"></div>
<!-- target icon -->
<svg style="left:154px;top:56px" width="16" height="16" viewBox="0 0 16 16"><g fill="none" stroke="#c6c3c6" stroke-width="1.15" stroke-linecap="round"><path d="M11.6 2.3 A6.6 6.6 0 1 0 14.4 6.4"/><path d="M9.6 4.6 A3.8 3.8 0 1 0 11.7 7.2"/><path d="M8 8 L12.6 3.4"/></g><circle cx="8" cy="8" r="1.3" fill="#c6c3c6"/><path d="M11 2.6 L14.6 1.4 L13.4 5 Z" fill="#c6c3c6"/></svg>
<svg style="left:174px;top:60px" width="10" height="8" viewBox="0 0 10 8"><path d="M1.6 2.4 L5 5.6 L8.4 2.4" fill="none" stroke="#d2cfd2" stroke-width="1.6" stroke-linecap="round" stroke-linejoin="round"/></svg>
<!-- combobox chevron -->
<svg style="left:427px;top:60px" width="10" height="8" viewBox="0 0 10 8"><path d="M1.4 2.4 L5 5.7 L8.6 2.4" fill="none" stroke="#b4b1b4" stroke-width="1.7" stroke-linecap="round" stroke-linejoin="round"/></svg>
<!-- play button -->
<svg style="left:462px;top:56px" width="16" height="16" viewBox="0 0 16 16"><circle cx="8" cy="8" r="6.5" fill="none" stroke="#c6c3c6" stroke-width="1.1"/><path d="M6.4 5.2 L11 8 L6.4 10.8 Z" fill="#c6c3c6"/></svg>
<svg style="left:484px;top:60px" width="10" height="8" viewBox="0 0 10 8"><path d="M1.6 2.4 L5 5.6 L8.4 2.4" fill="none" stroke="#c6c3c6" stroke-width="1.5" stroke-linecap="round" stroke-linejoin="round"/></svg>
<!-- search icon -->
<svg style="left:893px;top:55px" width="28" height="18" viewBox="0 0 28 18"><circle cx="7.4" cy="7.8" r="5.6" fill="none" stroke="#a5a2a5" stroke-width="1.3"/><path d="M11.5 12 L16 16.4" stroke="#a19ea1" stroke-width="1.5" stroke-linecap="round"/><path d="M18.6 8.2 L21.6 10.8 L24.6 8.2" fill="none" stroke="#a19ea1" stroke-width="1.2" stroke-linecap="round" stroke-linejoin="round"/></svg>
<!-- tab icons -->
<svg style="left:272px;top:95px" width="16" height="16" viewBox="0 0 16 16"><circle cx="8.05" cy="8" r="6.35" fill="none" stroke="#e9e7e9" stroke-width="1.6"/><path d="M10.9 4.7 L8.3 10.7 A1.5 1.5 0 1 1 5.9 8.9 Z" fill="#e9e7e9"/></svg>
<svg style="left:365px;top:99px" width="9" height="9" viewBox="0 0 9 9"><path d="M1.1 1.2 L7.7 7.8 M7.7 1.2 L1.1 7.8" stroke="#b3b0b3" stroke-width="1" stroke-linecap="round"/></svg>
<svg style="left:381px;top:96px" width="16" height="14" viewBox="0 0 16 14"><path d="M3.4 0.7 H14.8 Q16.1 0.7 15.8 2 L14 11.6 Q13.8 12.8 12.6 12.8 H1.2 Q-0.1 12.8 0.2 11.5 L2.2 1.8 Q2.4 0.7 3.4 0.7 Z" fill="#dddbdd"/><path d="M5.7 3.2 L9.9 7 L4.5 10 M7.2 9.4 H10" fill="none" stroke="#2a262a" stroke-width="1.25" stroke-linecap="round" stroke-linejoin="round"/></svg>
<!-- filter icons -->
<svg style="left:1061px;top:123px" width="18" height="13" viewBox="0 0 18 13"><circle cx="4.8" cy="5.2" r="3.5" fill="none" stroke="#bfbcbf" stroke-width="1.3"/><path d="M7.4 7.8 L10 10.6" stroke="#bfbcbf" stroke-width="1.5" stroke-linecap="round"/><path d="M11.6 5.2 L13.4 7 L15.2 5.2" fill="none" stroke="#bfbcbf" stroke-width="1.1" stroke-linecap="round" stroke-linejoin="round"/></svg>
<div style="position:absolute;left:1168px;top:122px;width:14px;height:14px;border-radius:50%;background:#9b989b"></div>
<span style="position:absolute;left:1168px;top:122px;width:14px;height:14px;line-height:14px;text-align:center;font-family:'Liberation Serif',serif;font-size:11.5px;-webkit-text-stroke:.3px;color:#2e2a2e">A</span>
<div style="position:absolute;left:1195px;top:122px;width:14px;height:14px;border-radius:50%;background:#c2c0c2"></div>
<svg style="left:1195px;top:122px" width="14" height="14" viewBox="0 0 14 14"><path d="M9.2 5.4 A2.7 2.7 0 1 0 9.7 7.4" fill="none" stroke="#2e2a2e" stroke-width="1.1" stroke-linecap="round"/><path d="M7.8 3 L10.2 3.9 L8.4 5.8 Z" fill="#2e2a2e"/></svg>
<!-- eject -->
<svg style="left:236px;top:677px" width="10" height="10" viewBox="0 0 10 10"><path d="M5 0.9 L9.2 5.4 H0.8 Z" fill="#e2dfe2"/><rect x="0.8" y="6.8" width="8.4" height="2.2" fill="#e2dfe2"/></svg>
<!-- bottom toolbar -->
<svg style="left:66px;top:708px" width="20" height="10" viewBox="0 0 20 10"><path d="M5 0 V10 M0 5 H10" stroke="#fff" stroke-width="2.2"/><path d="M13.4 4.2 L15.8 6.4 L18.2 4.2" fill="none" stroke="#d0cdd0" stroke-width="1.1" stroke-linecap="round" stroke-linejoin="round"/></svg>
<svg style="left:94px;top:706px" width="24" height="14" viewBox="0 0 24 14"><g transform="translate(7,7)"><g fill="#fff"><rect x="-1.3" y="-6.2" width="2.6" height="12.4" rx="0.4"/><rect x="-1.3" y="-6.2" width="2.6" height="12.4" rx="0.4" transform="rotate(45)"/><rect x="-1.3" y="-6.2" width="2.6" height="12.4" rx="0.4" transform="rotate(90)"/><rect x="-1.3" y="-6.2" width="2.6" height="12.4" rx="0.4" transform="rotate(135)"/><circle r="4.5"/></g><circle r="2" fill="#474247"/></g><path d="M16.2 6.2 L18.6 8.4 L21 6.2" fill="none" stroke="#d0cdd0" stroke-width="1.1" stroke-linecap="round" stroke-linejoin="round"/></svg>
<svg style="left:125px;top:706px" width="24" height="14" viewBox="0 0 24 14"><circle cx="7" cy="7.1" r="6.1" fill="#fff"/><path d="M5.3 9.8 V4.8 M3.7 6.2 L5.3 4.5 L6.9 6.2 M8.8 4.4 V9.4 M7.2 8 L8.8 9.7 L10.4 8" fill="none" stroke="#7a767a" stroke-width="1.2" stroke-linecap="round" stroke-linejoin="round"/><path d="M16.4 6.2 L18.8 8.4 L21.2 6.2" fill="none" stroke="#d0cdd0" stroke-width="1.1" stroke-linecap="round" stroke-linejoin="round"/></svg>
<svg style="left:221px;top:707px" width="14" height="14" viewBox="0 0 14 14"><path d="M7 1.2 L8.7 5.2 L13 5.6 L9.8 8.5 L10.7 12.8 L7 10.6 L3.3 12.8 L4.2 8.5 L1 5.6 L5.3 5.2 Z" fill="none" stroke="#bab7ba" stroke-width="1.1" stroke-linejoin="round"/></svg>
<svg style="left:247px;top:708px" width="10" height="13" viewBox="0 0 10 13"><path d="M1.2 1 L8.8 6.4 L1.2 11.8 Z" fill="none" stroke="#bab7ba" stroke-width="1.2" stroke-linejoin="round"/></svg>

</div></div><div id="hl"></div></div>
</body></html>
